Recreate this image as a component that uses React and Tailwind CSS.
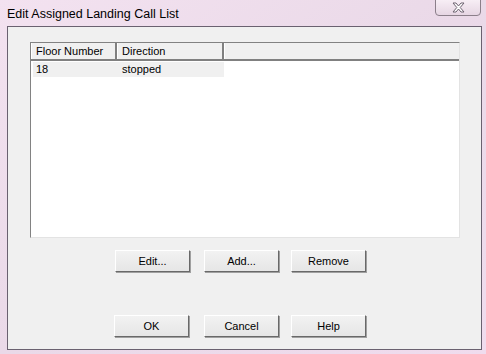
import React from 'react';

const Button = ({ label, className = '' }) => (
    <button
        className={`w-[75px] h-[22px] bg-gradient-to-b from-[#f2f2f2] to-[#e6e6e6] border border-t-white border-l-white border-r-[#696969] border-b-[#696969] shadow-[1px_1px_0_#a0a0a0] text-[11px] text-black ${className}`}
    >
        {label}
    </button>
);

const App = () => {
    return (
        <div className="w-[486px] h-[354px] flex flex-col bg-gradient-to-br from-[#f3e2f0] via-[#ead9e8] to-[#f0dcee] font-['Liberation_Sans',Arial,sans-serif] overflow-hidden">
            {/* title bar */}
            <div className="h-[26px] flex items-start shrink-0">
                <span className="pl-[7px] pt-[5px] text-[12.5px] text-black">Edit Assigned Landing Call List</span>
                <div className="ml-auto mr-[5px] -mt-[1px] w-[46px] h-[17px] border border-[#8b7f8a] rounded-b-[4px] bg-gradient-to-b from-[#f7eef5] to-[#e6d6e3] flex items-center justify-center">
                    <svg width="13" height="11" viewBox="0 0 13 11">
                        <path d="M1 1 H4 L6.5 4 L9 1 H12 L8.2 5.5 L12 10 H9 L6.5 7 L4 10 H1 L4.8 5.5 Z" fill="#fff" stroke="#6d6270" strokeWidth="1" strokeLinejoin="round" />
                    </svg>
                </div>
            </div>

            {/* client area */}
            <div className="ml-[7px] mr-[4px] h-[324px] bg-[#f0f0f0] border border-[#6a6170] flex flex-col">
                {/* list view */}
                <div className="ml-[22px] mt-[15px] w-[430px] h-[196px] bg-white border border-t-[#828282] border-l-[#828282] border-r-[#e3e3e3] border-b-[#e3e3e3] flex flex-col">
                    <div className="h-[18px] flex text-[11px] text-black bg-[#f0f0f0] border-b-2 border-[#808080]">
                        <div className="w-[86px] pl-[4px] flex items-center border-r-2 border-[#808080] border-l border-l-white">Floor Number</div>
                        <div className="w-[107px] pl-[4px] flex items-center border-r-2 border-[#808080] border-l border-l-white">Direction</div>
                        <div className="flex-1 border-l border-l-white" />
                    </div>
                    <div className="mt-[1px] ml-[2px] w-[191px] h-[15px] bg-[#f0f0f0] flex items-center text-[11px] text-black">
                        <span className="w-[86px] pl-[3px]">18</span>
                        <span className="pl-[3px]">stopped</span>
                    </div>
                </div>

                {/* edit buttons */}
                <div className="mt-[12px] flex">
                    <Button label="Edit..." className="ml-[107px]" />
                    <Button label="Add..." className="ml-[14px]" />
                    <Button label="Remove" className="ml-[12px]" />
                </div>

                {/* dialog buttons */}
                <div className="mt-[43px] flex">
                    <Button label="OK" className="ml-[106px]" />
                    <Button label="Cancel" className="ml-[15px]" />
                    <Button label="Help" className="ml-[12px]" />
                </div>
            </div>
        </div>
    );
};

export default App;
